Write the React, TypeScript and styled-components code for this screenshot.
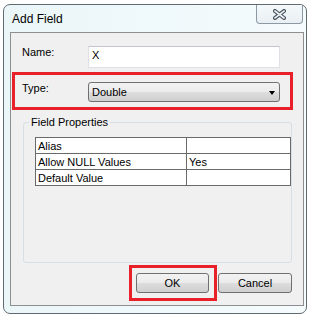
import styled, { createGlobalStyle } from 'styled-components'

const GlobalStyle = createGlobalStyle`
  html, body {
    margin: 0;
    padding: 0;
    background: #ffffff;
  }
  body {
    font-family: "Liberation Sans", Arial, sans-serif;
    font-size: 11px;
    color: #000000;
  }
`

const Stage = styled.div`
  width: 312px;
  height: 316px;
  padding: 4px 0 0 3px;
  box-sizing: border-box;
`

const Window = styled.div`
  width: 304px;
  height: 310px;
  box-sizing: border-box;
  border: 1px solid #5f6a72;
  border-radius: 7px;
  background: linear-gradient(90deg, #ebf6f8 0%, #f0f9fb 55%, #f6fbfc 100%);
  display: flex;
  flex-direction: column;
`

const TitleBar = styled.div`
  height: 27px;
  display: flex;
  align-items: flex-start;
  justify-content: space-between;
  padding-left: 8px;
`

const Title = styled.span`
  font-size: 12px;
  line-height: 14px;
  margin-top: 7px;
  color: #000000;
`

const CloseButton = styled.div`
  width: 47px;
  height: 19px;
  box-sizing: border-box;
  margin-right: 3px;
  border: 1px solid #8b99a5;
  border-top: none;
  border-radius: 0 0 4px 4px;
  background: linear-gradient(#f4f8fa, #e9eff3);
  display: flex;
  align-items: center;
  justify-content: center;
  padding-top: 1px;
`

const Client = styled.div`
  height: 274px;
  box-sizing: border-box;
  margin: 0 2px 0 6px;
  border: 1px solid #8d8f91;
  background: #f0f0f0;
  display: flex;
  flex-direction: column;
  align-items: flex-start;
`

const FieldRow = styled.div`
  display: flex;
  align-items: flex-start;
`

const NameRow = styled(FieldRow)`
  margin: 13px 0 0 11px;
`

const Label = styled.label`
  width: 66px;
  line-height: 13px;
`

const TextBox = styled.div`
  width: 192px;
  height: 22px;
  box-sizing: border-box;
  background: #ffffff;
  border: 1px solid #dde1e6;
  border-top-color: #c2c6cc;
  padding: 1px 3px;
  line-height: 14px;
`

const Highlight = styled.div<{ $pad: string }>`
  border: 3px solid #e8202a;
  box-sizing: border-box;
  padding: ${(p) => p.$pad};
`

const TypeFrame = styled(Highlight)`
  width: 281px;
  height: 38px;
  margin: 4px 0 0 1px;
`

const Combo = styled.div`
  width: 192px;
  height: 20px;
  box-sizing: border-box;
  border: 1px solid #707070;
  border-radius: 3px;
  background: linear-gradient(#f2f2f2 0%, #ebebeb 50%, #dddddd 51%, #cfcfcf 100%);
  display: flex;
  align-items: center;
  justify-content: space-between;
  padding: 0 4px 0 3px;
`

const Arrow = styled.span`
  width: 0;
  height: 0;
  border-left: 3.5px solid transparent;
  border-right: 3.5px solid transparent;
  border-top: 4px solid #000000;
  margin-top: 1px;
`

const Group = styled.fieldset`
  width: 269px;
  box-sizing: border-box;
  margin: 6px 0 0 12px;
  padding: 0 0 76px 0;
  border: 1px solid #d5dfe5;
  border-radius: 3px;
`

const GroupTitle = styled.legend`
  margin-left: 5px;
  padding: 0 2px;
  line-height: 13px;
`

const PropTable = styled.table`
  border-collapse: collapse;
  table-layout: fixed;
  width: 245px;
  margin: 8px 0 0 11px;
  background: #ffffff;
`

const Cell = styled.td<{ $w: number }>`
  width: ${(p) => p.$w}px;
  height: 15px;
  padding: 0 2px;
  line-height: 14px;
  border: 1px solid #6a6a6a;
  white-space: nowrap;
`

const ButtonBar = styled.div`
  align-self: flex-end;
  display: flex;
  align-items: center;
  margin: 2px 11px 0 0;
`

const OkFrame = styled(Highlight)`
  display: flex;
`

const Button = styled.button<{ $w: number }>`
  width: ${(p) => p.$w}px;
  height: 20px;
  box-sizing: border-box;
  border: 1px solid #707070;
  border-radius: 3px;
  background: linear-gradient(#f2f2f2 0%, #ebebeb 50%, #dddddd 51%, #cfcfcf 100%);
  font-family: inherit;
  font-size: 11px;
  color: #000000;
  padding: 0;
`

const CancelButton = styled(Button)`
  margin-left: 1px;
`

const rows = [
  ['Alias', ''],
  ['Allow NULL Values', 'Yes'],
  ['Default Value', ''],
]

function CloseGlyph() {
  return (
    <svg width="13" height="11" viewBox="0 0 13 11">
      <path d="M2 2 L11 9 M11 2 L2 9" stroke="#4b5660" strokeWidth="4" strokeLinecap="square" />
      <path d="M2 2 L11 9 M11 2 L2 9" stroke="#eef2f5" strokeWidth="1.6" strokeLinecap="square" />
    </svg>
  )
}

export default function App() {
  return (
    <Stage>
      <GlobalStyle />
      <Window>
        <TitleBar>
          <Title>Add Field</Title>
          <CloseButton>
            <CloseGlyph />
          </CloseButton>
        </TitleBar>
        <Client>
          <NameRow>
            <Label>Name:</Label>
            <TextBox>X</TextBox>
          </NameRow>
          <TypeFrame $pad="7px 0 0 7px">
            <FieldRow>
              <Label>Type:</Label>
              <Combo>
                <span>Double</span>
                <Arrow />
              </Combo>
            </FieldRow>
          </TypeFrame>
          <Group>
            <GroupTitle>Field Properties</GroupTitle>
            <PropTable>
              <tbody>
                {rows.map(([name, value]) => (
                  <tr key={name}>
                    <Cell $w={146}>{name}</Cell>
                    <Cell $w={99}>{value}</Cell>
                  </tr>
                ))}
              </tbody>
            </PropTable>
          </Group>
          <ButtonBar>
            <OkFrame $pad="5px 5px 5px 4px">
              <Button $w={73}>OK</Button>
            </OkFrame>
            <CancelButton $w={74}>Cancel</CancelButton>
          </ButtonBar>
        </Client>
      </Window>
    </Stage>
  )
}
